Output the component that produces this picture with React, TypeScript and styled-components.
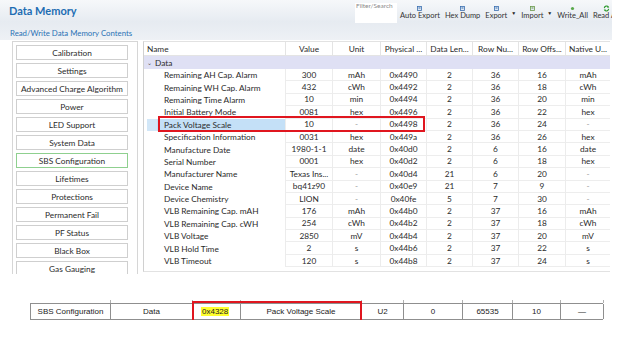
import React from "react";
import styled, { createGlobalStyle } from "styled-components";

const GlobalStyle = createGlobalStyle`
  html, body {
    margin: 0;
    padding: 0;
    background: #ffffff;
  }
  body {
    font-family: Lato, "Open Sans", sans-serif;
  }
`;

const Page = styled.div`
  width: 640px;
  height: 360px;
  background: #ffffff;
  overflow: hidden;
`;

const Frame = styled.div`
  width: 612px;
  overflow: hidden;
`;

const Header = styled.div`
  height: 40px;
  background: linear-gradient(to bottom, #f6f8fa 0px, #e6ebf1 22px, #eef1f5 40px);
  display: flex;
  flex-direction: column;
`;

const TopRow = styled.div`
  height: 28px;
  display: flex;
  align-items: flex-start;
`;

const Title = styled.div`
  flex: none;
  padding: 4px 0 0 9px;
  font-size: 11px;
  font-weight: 700;
  color: #1d6db3;
  width: 346px;
`;

const SearchBox = styled.div`
  flex: none;
  margin-top: 3px;
  width: 42px;
  height: 20px;
  background: #ffffff;
  font-size: 6.5px;
  color: #8a8a8a;
  line-height: 6px;
  padding-left: 1px;
  overflow: hidden;
  box-sizing: border-box;
`;

const Toolbar = styled.div`
  flex: none;
  display: flex;
  align-items: flex-start;
  gap: 5px;
  margin-left: 3px;
`;

const ToolItem = styled.div`
  display: flex;
  flex-direction: column;
  align-items: center;
  font-size: 7.5px;
  color: #333333;
  white-space: nowrap;
  padding-top: 5px;
`;

const ToolIcon = styled.div`
  height: 6px;
  display: flex;
  align-items: center;
  justify-content: center;
`;

const Caret = styled.span`
  font-size: 5px;
  color: #222;
  padding-top: 10px;
  margin-left: -1px;
`;

const SubTitle = styled.div`
  height: 12px;
  padding-left: 10px;
  font-size: 7.8px;
  color: #2a72b5;
  line-height: 10px;
`;

const Main = styled.div`
  display: flex;
  align-items: flex-start;
  margin-top: 1px;
`;

const SidePanel = styled.div`
  margin-left: 12px;
  width: 126px;
  height: 233px;
  border: 1px solid #d6d6d6;
  border-bottom: none;
  box-sizing: border-box;
  padding: 3px 0 0 3px;
  display: flex;
  flex-direction: column;
  gap: 3px;
  overflow: hidden;
`;

const SideButton = styled.div<{ $active?: boolean }>`
  flex: none;
  width: 112px;
  height: 15px;
  box-sizing: border-box;
  border: 1px solid ${({ $active }) => ($active ? "#8fd08f" : "#cfcfcf")};
  background: #ffffff;
  font-size: 8.3px;
  color: #2b2b2b;
  display: flex;
  align-items: center;
  justify-content: center;
  white-space: nowrap;
`;

const TableBox = styled.div`
  position: relative;
  margin-left: 5px;
  width: 467px;
  height: 231px;
  border-left: 1px solid #d0d0d0;
  border-top: 1px solid #e2e2e2;
  border-bottom: 1px solid #e2e2e2;
  box-sizing: border-box;
  overflow: hidden;
`;

const cols = "142px 47px 48px 46px 46px 46px 47px 45px";

const HeadRow = styled.div`
  display: grid;
  grid-template-columns: ${cols};
  height: 14px;
  border-bottom: 1px solid #e4e4e4;
  box-sizing: border-box;
`;

const HeadCell = styled.div<{ $left?: boolean }>`
  font-size: 8.3px;
  color: #2b2b2b;
  display: flex;
  align-items: center;
  justify-content: ${({ $left }) => ($left ? "flex-start" : "center")};
  padding-left: ${({ $left }) => ($left ? "3px" : "0")};
  border-right: 1px solid #e4e4e4;
  white-space: nowrap;
  overflow: hidden;
`;

const GroupRow = styled.div`
  height: 13px;
  background: #dfe0f4;
  font-size: 8.3px;
  color: #2b2b2b;
  display: flex;
  align-items: center;
  padding-left: 3px;
  gap: 3px;
`;

const Chevron = styled.span`
  font-size: 6px;
  color: #555;
`;

const Row = styled.div`
  display: grid;
  grid-template-columns: ${cols};
  height: 12.4px;
`;

const Cell = styled.div<{ $muted?: boolean }>`
  font-size: 8.3px;
  color: ${({ $muted }) => ($muted ? "#9a9a9a" : "#2b2b2b")};
  display: flex;
  align-items: center;
  justify-content: center;
  border-right: 1px solid #ececec;
  border-bottom: 1px solid #ededed;
  box-sizing: border-box;
  white-space: nowrap;
  overflow: hidden;
`;

const NameCell = styled.div<{ $selected?: boolean }>`
  font-size: 8.3px;
  color: #2b2b2b;
  display: flex;
  align-items: center;
  padding-left: 20px;
  border-right: 1px solid #ececec;
  background: ${({ $selected }) =>
    $selected
      ? "linear-gradient(to right, transparent 3px, #d2e7f8 3px, #d2e7f8 13px, #c4e0f7 13px)"
      : "transparent"};
  white-space: nowrap;
  overflow: hidden;
`;

const RedBox = styled.div<{ $h: number }>`
  position: absolute;
  border: 2px solid #e0161f;
  box-sizing: border-box;
  height: ${({ $h }) => $h}px;
  pointer-events: none;
`;

const BottomWrap = styled.div`
  position: relative;
  margin: 29px 0 0 30px;
  width: 573px;
`;

const BottomTable = styled.div`
  display: grid;
  grid-template-columns: 80px 82px 48px 121px 42px 59px 50px 48px 43px;
  height: 17px;
  border-top: 1px solid #8f8f8f;
  border-bottom: 1px solid #8f8f8f;
  box-sizing: border-box;
  border-left: 1px solid #8f8f8f;
`;

const BCell = styled.div<{ $left?: boolean }>`
  position: relative;
  font-family: "Liberation Sans", Arial, sans-serif;
  font-size: 8px;
  color: #222;
  display: flex;
  align-items: center;
  justify-content: ${({ $left }) => ($left ? "flex-start" : "center")};
  padding-left: ${({ $left }) => ($left ? "8px" : "0")};
  border-right: 1px solid #8f8f8f;
  white-space: nowrap;
  &::after {
    content: "";
    position: absolute;
    right: -1px;
    top: -4px;
    height: 3px;
    border-right: 1px solid #b0b0b0;
  }
`;

const Mark = styled.span`
  background: #ffff2e;
  padding: 0 1px;
`;

type Entry = [string, string, string, string, string, string, string, string];

const entries: Entry[] = [
  ["Remaining AH Cap. Alarm", "300", "mAh", "0x4490", "2", "36", "16", "mAh"],
  ["Remaining WH Cap. Alarm", "432", "cWh", "0x4492", "2", "36", "18", "cWh"],
  ["Remaining Time Alarm", "10", "min", "0x4494", "2", "36", "20", "min"],
  ["Initial Battery Mode", "0081", "hex", "0x4496", "2", "36", "22", "hex"],
  ["Pack Voltage Scale", "10", "-", "0x4498", "2", "36", "24", "-"],
  ["Specification Information", "0031", "hex", "0x449a", "2", "36", "26", "hex"],
  ["Manufacture Date", "1980-1-1", "date", "0x40d0", "2", "6", "16", "date"],
  ["Serial Number", "0001", "hex", "0x40d2", "2", "6", "18", "hex"],
  ["Manufacturer Name", "Texas Ins...", "-", "0x40d4", "21", "6", "20", "-"],
  ["Device Name", "bq41z90", "-", "0x40e9", "21", "7", "9", "-"],
  ["Device Chemistry", "LION", "-", "0x40fe", "5", "7", "30", "-"],
  ["VLB Remaining Cap. mAH", "176", "mAh", "0x44b0", "2", "37", "16", "mAh"],
  ["VLB Remaining Cap. cWH", "254", "cWh", "0x44b2", "2", "37", "18", "cWh"],
  ["VLB Voltage", "2850", "mV", "0x44b4", "2", "37", "20", "mV"],
  ["VLB Hold Time", "2", "s", "0x44b6", "2", "37", "22", "s"],
  ["VLB Timeout", "120", "s", "0x44b8", "2", "37", "24", "s"],
];

const sections = [
  "Calibration",
  "Settings",
  "Advanced Charge Algorithm",
  "Power",
  "LED Support",
  "System Data",
  "SBS Configuration",
  "Lifetimes",
  "Protections",
  "Permanent Fail",
  "PF Status",
  "Black Box",
  "Gas Gauging",
];

const headers = ["Name", "Value", "Unit", "Physical ...", "Data Len...", "Row Nu...", "Row Offs...", "Native U..."];

const DocIcon = ({ color }: { color: string }) => (
  <svg width="5" height="5" viewBox="0 0 5 5">
    <rect x="0.5" y="0.5" width="4" height="4" fill="#dfe8f3" stroke={color} strokeWidth="0.8" />
    <rect x="1.5" y="1.5" width="2" height="1" fill={color} />
  </svg>
);

const PlusIcon = () => (
  <svg width="5" height="5" viewBox="0 0 5 5">
    <circle cx="2.5" cy="2.5" r="1.6" fill="#58a84a" />
  </svg>
);

const RefreshIcon = () => (
  <svg width="7" height="7" viewBox="0 0 8 8">
    <path d="M1.5 3.5 A2.6 2.6 0 0 1 6.2 2.3" fill="none" stroke="#2f9a2f" strokeWidth="1.3" />
    <path d="M6.5 4.5 A2.6 2.6 0 0 1 1.8 5.7" fill="none" stroke="#2f9a2f" strokeWidth="1.3" />
    <path d="M5.2 0.8 L7.2 2.8 L4.8 3 Z" fill="#2f9a2f" />
    <path d="M2.8 7.2 L0.8 5.2 L3.2 5 Z" fill="#2f9a2f" />
  </svg>
);

const App: React.FC = () => {
  return (
    <Page>
      <GlobalStyle />
      <Frame>
        <Header>
          <TopRow>
            <Title>Data Memory</Title>
            <SearchBox>Filter/Search</SearchBox>
            <Toolbar>
              <ToolItem>
                <ToolIcon>
                  <DocIcon color="#3b6fb0" />
                </ToolIcon>
                Auto Export
              </ToolItem>
              <ToolItem>
                <ToolIcon>
                  <DocIcon color="#3b6fb0" />
                </ToolIcon>
                Hex Dump
              </ToolItem>
              <ToolItem>
                <ToolIcon>
                  <DocIcon color="#3b6fb0" />
                </ToolIcon>
                Export
              </ToolItem>
              <Caret>▼</Caret>
              <ToolItem>
                <ToolIcon>
                  <DocIcon color="#6a9a4a" />
                </ToolIcon>
                Import
              </ToolItem>
              <Caret>▼</Caret>
              <ToolItem>
                <ToolIcon>
                  <PlusIcon />
                </ToolIcon>
                Write_All
              </ToolItem>
              <ToolItem>
                <ToolIcon>
                  <RefreshIcon />
                </ToolIcon>
                Read All
              </ToolItem>
            </Toolbar>
          </TopRow>
          <SubTitle>Read/Write Data Memory Contents</SubTitle>
        </Header>

        <Main>
          <SidePanel>
            {sections.map((name) => (
              <SideButton key={name} $active={name === "SBS Configuration"}>
                {name}
              </SideButton>
            ))}
          </SidePanel>

          <TableBox>
            <HeadRow>
              {headers.map((h, i) => (
                <HeadCell key={h} $left={i === 0}>
                  {h}
                </HeadCell>
              ))}
            </HeadRow>
            <GroupRow>
              <Chevron>⌄</Chevron>
              Data
            </GroupRow>
            {entries.map((e) => (
              <Row key={e[0]}>
                <NameCell $selected={e[0] === "Pack Voltage Scale"}>{e[0]}</NameCell>
                {e.slice(1).map((v, i) => (
                  <Cell key={i} $muted={v === "-"}>
                    {v}
                  </Cell>
                ))}
              </Row>
            ))}
            <RedBox $h={16} style={{ left: 14, top: 74, width: 267 }} />
          </TableBox>
        </Main>

        <BottomWrap>
          <BottomTable>
            <BCell>SBS Configuration</BCell>
            <BCell>Data</BCell>
            <BCell $left>
              <Mark>0x4328</Mark>
            </BCell>
            <BCell>Pack Voltage Scale</BCell>
            <BCell>U2</BCell>
            <BCell>0</BCell>
            <BCell>65535</BCell>
            <BCell>10</BCell>
            <BCell>—</BCell>
          </BottomTable>
          <RedBox $h={21} style={{ left: 162, top: -2, width: 170 }} />
        </BottomWrap>
      </Frame>
    </Page>
  );
};

export default App;
